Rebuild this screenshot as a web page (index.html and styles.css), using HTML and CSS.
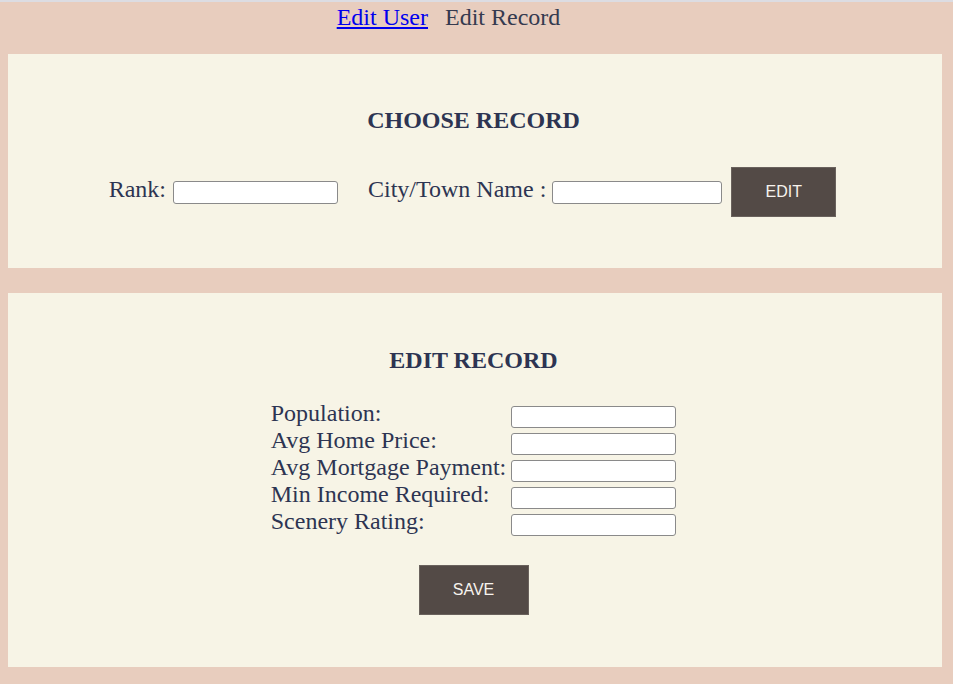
FILE: index.html
```html
<!DOCTYPE html>
<html lang="en">
<head>
<meta charset="utf-8">
<title>Edit Record</title>
<link rel="stylesheet" href="styles.css">
</head>
<body>
<div class="page">
  <nav class="nav">
    <a href="#" class="nav-link">Edit User</a>
    <span class="nav-current">Edit Record</span>
  </nav>

  <section class="panel panel-choose">
    <h2 class="panel-title">CHOOSE RECORD</h2>
    <form class="choose-row">
      <label class="field-label label-rank" for="rank">Rank:</label>
      <input class="text-input input-rank" id="rank" type="text">
      <label class="field-label label-city" for="city">City/Town Name :</label>
      <input class="text-input input-city" id="city" type="text">
      <button class="btn btn-edit" type="button">EDIT</button>
    </form>
  </section>

  <section class="panel panel-edit">
    <h2 class="panel-title">EDIT RECORD</h2>
    <form class="edit-form">
      <div class="edit-grid">
        <label class="grid-label" for="pop">Population:</label>
        <input class="text-input grid-input" id="pop" type="text">
        <label class="grid-label" for="price">Avg Home Price:</label>
        <input class="text-input grid-input" id="price" type="text">
        <label class="grid-label" for="mort">Avg Mortgage Payment:</label>
        <input class="text-input grid-input" id="mort" type="text">
        <label class="grid-label" for="income">Min Income Required:</label>
        <input class="text-input grid-input" id="income" type="text">
        <label class="grid-label" for="scenery">Scenery Rating:</label>
        <input class="text-input grid-input" id="scenery" type="text">
      </div>
      <button class="btn btn-save" type="button">SAVE</button>
    </form>
  </section>
</div>
</body>
</html>
```
FILE: styles.css
```css
html, body {
  margin: 0;
  padding: 0;
  background: #ffffff;
}

body {
  font-family: "Liberation Serif", "Times New Roman", serif;
  color: #2d3452;
}

.page {
  background: #e8cdbe;
  border-top: 2px solid #dcdce2;
  padding: 1px 0 17px;
}

.nav {
  display: flex;
  justify-content: center;
  gap: 17px;
  padding-right: 56px;
  font-size: 24px;
  line-height: 28px;
  margin-bottom: 23px;
}

.nav-link {
  color: #0000ee;
  text-decoration: underline;
}

.nav-current {
  color: #353a4f;
}

.panel {
  margin: 0 11px 0 8px;
  padding-right: 3px;
  background: #f7f4e6;
}

.panel-choose {
  padding-top: 52px;
  padding-bottom: 51px;
}

.panel-edit {
  margin-top: 25px;
  padding-top: 53px;
  padding-bottom: 52px;
}

.panel-title {
  margin: 0 0 33px;
  font-size: 24px;
  line-height: 28px;
  font-weight: bold;
  text-align: center;
  color: #2d3452;
}

.panel-edit .panel-title {
  margin-bottom: 29px;
}

.choose-row {
  display: flex;
  justify-content: center;
  align-items: center;
  margin: 0;
  padding-right: 2px;
}

.field-label {
  font-size: 24px;
  line-height: 28px;
  margin-bottom: 6px;
}

.label-rank {
  margin-right: 7px;
}

.label-city {
  margin-left: 30px;
  margin-right: 6px;
}

.text-input {
  box-sizing: border-box;
  height: 23px;
  margin: 0;
  padding: 0 4px;
  background: #ffffff;
  border: 1px solid #8a8a8a;
  border-radius: 3px;
  font-size: 14px;
}

.input-rank {
  width: 165px;
}

.input-city {
  width: 170px;
  margin-right: 9px;
}

.btn {
  box-sizing: border-box;
  height: 50px;
  margin: 0;
  padding: 0;
  background: #534a46;
  color: #f7f3ee;
  border: 1px solid #6a625d;
  font-family: "Liberation Sans", Arial, sans-serif;
  font-size: 16px;
  cursor: pointer;
}

.btn-edit {
  width: 105px;
}

.edit-form {
  margin: 0;
}

.edit-grid {
  display: grid;
  grid-template-columns: auto 165px;
  grid-auto-rows: 27px;
  column-gap: 5px;
  justify-content: center;
}

.grid-label {
  align-self: start;
  font-size: 24px;
  line-height: 21px;
  white-space: nowrap;
}

.grid-input {
  align-self: center;
  width: 165px;
  height: 22px;
}

.btn-save {
  display: block;
  width: 110px;
  margin: 27px auto 0;
}
```
